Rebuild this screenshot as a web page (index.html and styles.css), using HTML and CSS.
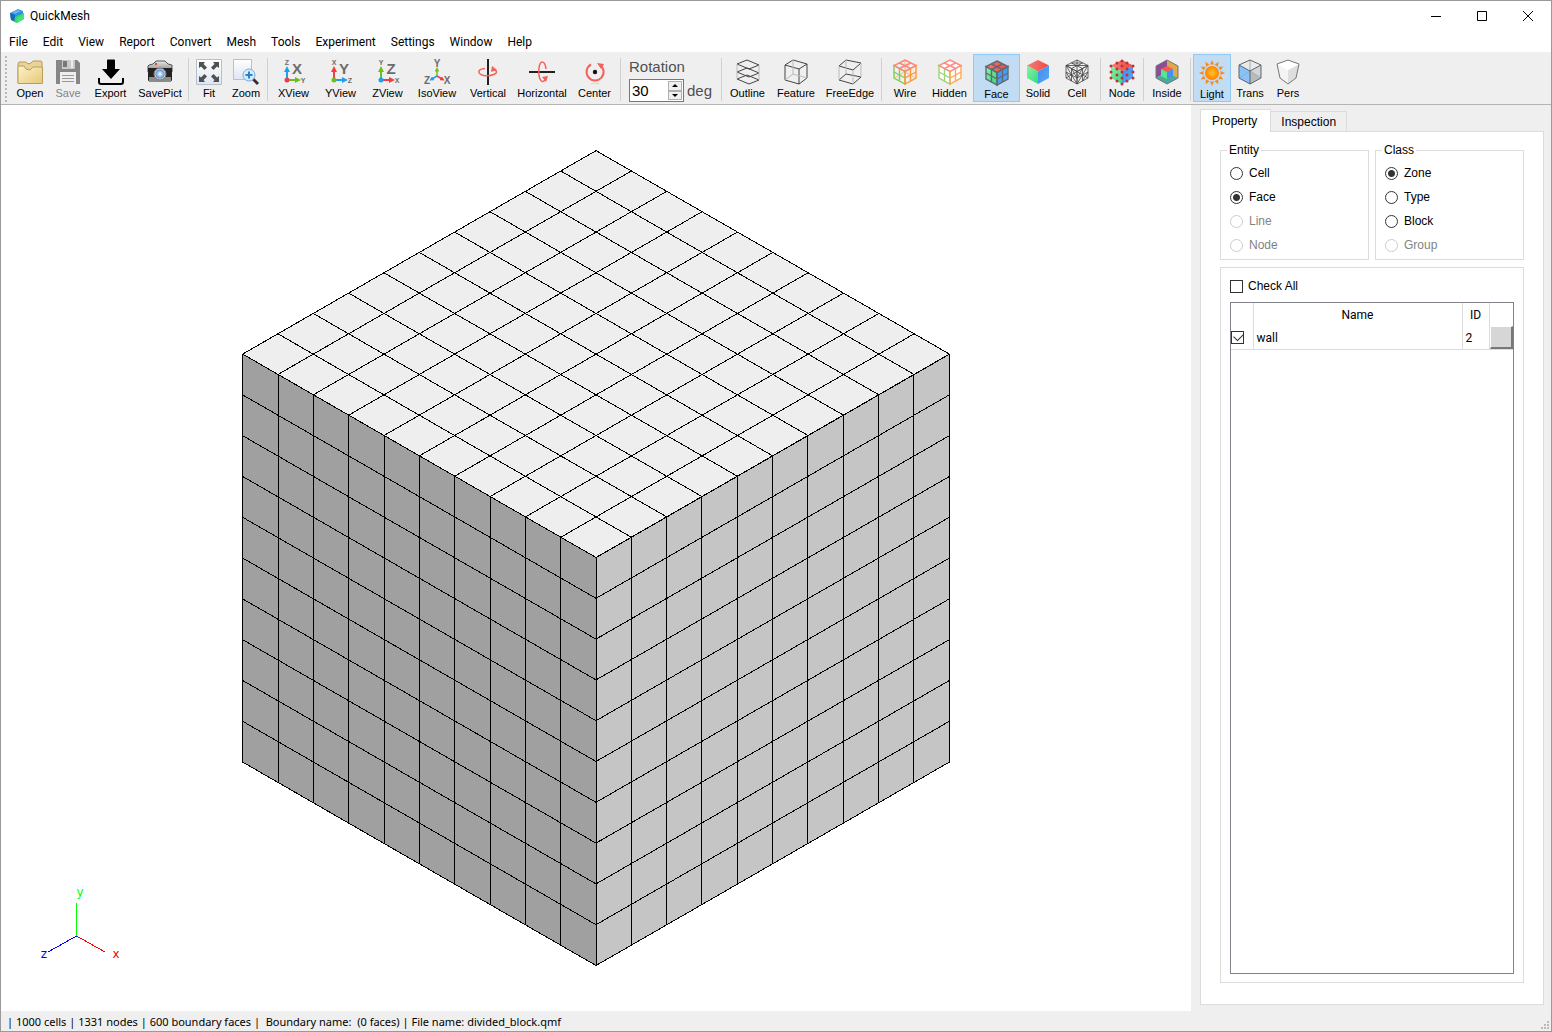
FILE: index.html
```html
<!DOCTYPE html>
<html lang="en">
<head>
    <meta charset="UTF-8">
    <meta name="viewport" content="width=device-width, initial-scale=1.0">
    <title>QuickMesh</title>
    <link rel="stylesheet" href="styles.css">
</head>
<body>
    <!-- Shapes shared by the toolbar icons -->
    <svg class="defs" aria-hidden="true">
        <defs>
            <marker id="arrow-blue" viewBox="0 0 6 6" refX="2" refY="3" markerWidth="3" markerHeight="3" orient="auto"><path d="M0 0L6 3L0 6z" fill="#1ea0f0"/></marker>
            <marker id="arrow-green" viewBox="0 0 6 6" refX="2" refY="3" markerWidth="3" markerHeight="3" orient="auto"><path d="M0 0L6 3L0 6z" fill="#6cbf1e"/></marker>
            <marker id="arrow-red" viewBox="0 0 6 6" refX="2" refY="3" markerWidth="3" markerHeight="3" orient="auto"><path d="M0 0L6 3L0 6z" fill="#f03c46"/></marker>
            <linearGradient id="folder" x1="0" y1="0" x2="1" y2="1"><stop offset="0" stop-color="#fdf3c8"/><stop offset="1" stop-color="#e5c87a"/></linearGradient>
            <linearGradient id="red-face" x1="0" y1="0" x2="1" y2="0"><stop offset="0" stop-color="#f87c78"/><stop offset="1" stop-color="#f04840"/></linearGradient>
            <linearGradient id="green-face" x1="0" y1="0" x2="1" y2="1"><stop offset="0" stop-color="#8df0a8"/><stop offset="1" stop-color="#2fdc78"/></linearGradient>
            <linearGradient id="blue-face" x1="0" y1="0" x2="1" y2="1"><stop offset="0" stop-color="#3c8cf0"/><stop offset="1" stop-color="#5aaaf8"/></linearGradient>
            <linearGradient id="tile" x1="0" y1="0" x2="0" y2="1"><stop offset="0" stop-color="#fff"/><stop offset="1" stop-color="#dde6f2"/></linearGradient>
            <linearGradient id="steel" x1="0" y1="0" x2="0" y2="1"><stop offset="0" stop-color="#e8e8e8"/><stop offset="1" stop-color="#808080"/></linearGradient>
            <radialGradient id="sun"><stop offset="0" stop-color="#ffc428"/><stop offset="1" stop-color="#ff8200"/></radialGradient>
            <radialGradient id="lens"><stop offset="0" stop-color="#fff"/><stop offset="0.5" stop-color="#a8ccff"/><stop offset="1" stop-color="#5582c8"/></radialGradient>
            <path id="ray" d="M13 0L15 4.500H11z"/>
            <g id="solid-cube">
                <path d="M13 1L24 6.500L13 12.500L2 6.500z" fill="url(#red-face)"/>
                <path d="M2 6.500L13 12.500V25L2 19z" fill="url(#green-face)"/>
                <path d="M24 6.500L13 12.500V25L24 19z" fill="url(#blue-face)"/>
            </g>
            <path id="top-grid" d="M13 1L24 6.500L13 12.500L2 6.500zM7.500 4L18.500 9.500M18.500 4L7.500 9.500"/>
            <path id="left-grid" d="M2 6.500L13 12.500V25L2 19zM7.500 9.500V22M2 13L13 19"/>
            <path id="right-grid" d="M24 6.500L13 12.500V25L24 19zM18.500 9.500V22M24 13L13 19"/>
        </defs>
    </svg>

    <div class="app">
        <header class="titlebar">
            <svg class="app-icon" viewBox="0 0 16 16" aria-hidden="true">
                <path d="M1 5L9 1L14 3V7L7 10L2 12z" fill="#2f8fe0"/>
                <path d="M1 5L6 7V14L2 12z" fill="#1769b8"/>
                <path d="M6 9L10 7L15 5V11L8 15L5 14z" fill="#35d36c"/>
                <path d="M8 10L15 6V11L8 15z" fill="#45e080"/>
                <path d="M3 4L9 2L12 3L6 6z" fill="#65b6f2"/>
            </svg>
            <h1 class="app-title">QuickMesh</h1>
            <div class="window-buttons">
                <button aria-label="Minimize"><svg viewBox="0 0 10 10"><path d="M0 5.500H10"/></svg></button>
                <button aria-label="Maximize"><svg viewBox="0 0 10 10"><path d="M.5.5H9.500V9.500H.5z"/></svg></button>
                <button aria-label="Close"><svg viewBox="0 0 10 10"><path d="M0 0L10 10M10 0L0 10"/></svg></button>
            </div>
        </header>

        <nav class="menubar">
            <button>File</button>
            <button>Edit</button>
            <button>View</button>
            <button>Report</button>
            <button>Convert</button>
            <button>Mesh</button>
            <button>Tools</button>
            <button>Experiment</button>
            <button>Settings</button>
            <button>Window</button>
            <button>Help</button>
        </nav>

        <div class="toolbar">
            <span class="grip"></span>
            <button class="tool w38">
                <svg viewBox="0 0 26 26"><path d="M1 24V5L2 3H9L11 5L14 4L16 2H24L25 3V24z" fill="#e9d396" stroke="#b99b53"/><path d="M1 24.500V8.500L2 7H7L9 10L13 11L16 8H25.500V24.500z" fill="url(#folder)" stroke="#bb9d58"/></svg>
                <span>Open</span>
            </button>
            <button class="tool w38" disabled>
                <svg viewBox="0 0 26 26"><path d="M1 1H22L25 4V25H1z" fill="#868686"/><path d="M7 1H20V10H7z" fill="#c9c9c9"/><path d="M8 2H12V8H8z" fill="#777"/><path d="M16 1H18V9H16z" fill="#eee"/><path d="M5 13H21V25H5z" fill="#eee"/><path d="M7 16.500H19M7 19.500H19M7 22.500H19" stroke="#999"/></svg>
                <span>Save</span>
            </button>
            <button class="tool w47">
                <svg viewBox="0 0 26 26"><path d="M9 1.500Q9 .5 10 .5H16Q17 .5 17 1.500V10H22L13 20L4 10H9z"/><path d="M1 19V23Q1 25 3 25H23Q25 25 25 23V19" fill="none" stroke="#000" stroke-width="2"/></svg>
                <span>Export</span>
            </button>
            <button class="tool w52">
                <svg viewBox="0 0 26 26"><path d="M2 6L6 5L9 2H18L21 5L25 6V13H1V7z" fill="url(#steel)" stroke="#555"/><path d="M1 9H25V21Q25 22 24 22H2Q1 22 1 21z" fill="#222"/><path d="M2 18H24V23H2z" fill="#8c8c8c"/><circle cx="13" cy="15" r="6" fill="#ccc" stroke="#777"/><circle cx="13" cy="15" r="4.500" fill="url(#lens)"/><circle cx="9" cy="5" r="1.200" fill="#ee4438"/></svg>
                <span>SavePict</span>
            </button>
            <span class="sep"></span>
            <button class="tool w36">
                <svg viewBox="0 0 26 26"><path d="M.5.5H25.500V25.500H.5z" fill="url(#tile)" stroke="#b7bfca"/><path d="M3 3H9L7.500 5L11 8.500L8.500 11L5 7.500L3 9zM23 3V9L21 7.500L17.500 11L15 8.500L18.500 5L17 3zM3 23V17L5 18.500L8.500 15L11 17.500L7.500 21L9 23zM23 23H17L18.500 21L15 17.500L17.500 15L21 18.500L23 17z" fill="#505050"/></svg>
                <span>Fit</span>
            </button>
            <button class="tool w38">
                <svg viewBox="0 0 26 26"><path d="M.5.5H18.500V20.500H.5z" fill="url(#tile)" stroke="#b7bfca"/><path d="M20 20L25 25" stroke="#333" stroke-width="3"/><circle cx="16" cy="16" r="6" fill="#d3ecff" stroke="#7caad8"/><path d="M12.500 16H19.500M16 12.500V19.500" stroke="#2482d2" stroke-width="2"/></svg>
                <span>Zoom</span>
            </button>
            <span class="sep"></span>
            <button class="tool w47">
                <svg viewBox="0 0 26 26" class="view-icon"><path d="M6 20V11" stroke="#1ea0f0" stroke-width="2" marker-end="url(#arrow-blue)"/><path d="M6 21H16" stroke="#6cbf1e" stroke-width="2" marker-end="url(#arrow-green)"/><circle cx="6" cy="21" r="2.500" fill="#f03c46"/><text x="6" y="6" class="small">Z</text><text x="22" y="24" class="small">Y</text><text x="16" y="15" class="big">X</text></svg>
                <span>XView</span>
            </button>
            <button class="tool w47">
                <svg viewBox="0 0 26 26" class="view-icon"><path d="M6 20V11" stroke="#f03c46" stroke-width="2" marker-end="url(#arrow-red)"/><path d="M6 21H16" stroke="#1ea0f0" stroke-width="2" marker-end="url(#arrow-blue)"/><circle cx="6" cy="21" r="2.500" fill="#6cbf1e"/><text x="6" y="6" class="small">X</text><text x="22" y="24" class="small">Z</text><text x="16" y="15" class="big">Y</text></svg>
                <span>YView</span>
            </button>
            <button class="tool w47">
                <svg viewBox="0 0 26 26" class="view-icon"><path d="M6 20V11" stroke="#6cbf1e" stroke-width="2" marker-end="url(#arrow-green)"/><path d="M6 21H16" stroke="#f03c46" stroke-width="2" marker-end="url(#arrow-red)"/><circle cx="6" cy="21" r="2.500" fill="#1ea0f0"/><text x="6" y="6" class="small">Y</text><text x="22" y="24" class="small">X</text><text x="16" y="15" class="big">Z</text></svg>
                <span>ZView</span>
            </button>
            <button class="tool w52">
                <svg viewBox="0 0 26 26" class="view-icon"><path d="M13 17V11" stroke="#6cbf1e" stroke-width="1.500" marker-end="url(#arrow-green)"/><path d="M13 17L8 20" stroke="#1ea0f0" stroke-width="1.500" marker-end="url(#arrow-blue)"/><path d="M13 17L18 20" stroke="#f03c46" stroke-width="1.500" marker-end="url(#arrow-red)"/><text x="13" y="8" class="mid">Y</text><text x="3" y="25" class="mid">Z</text><text x="23" y="25" class="mid">X</text></svg>
                <span>IsoView</span>
            </button>
            <button class="tool w50">
                <svg viewBox="0 0 26 26"><path d="M13 0V26" stroke="#222" stroke-width="2"/><path d="M10 9.500C2 10 2 15 9 16.500C17 17.500 25 14 20 11L17 10" fill="none" stroke="#f4605a" stroke-width="1.500"/><path d="M17 7L22 11L16 13z" fill="#f4605a"/></svg>
                <span>Vertical</span>
            </button>
            <button class="tool w58">
                <svg viewBox="0 0 26 26"><path d="M0 13H26" stroke="#222" stroke-width="2"/><path d="M17 10C16 1 11 1 10 9C9 18 12 26 16 21L17 18" fill="none" stroke="#f4605a" stroke-width="1.500"/><path d="M13 18L19 17L17 23z" fill="#f4605a"/></svg>
                <span>Horizontal</span>
            </button>
            <button class="tool w47">
                <svg viewBox="0 0 26 26"><path d="M9 5.500A8.500 8.500 0 1 0 18 6" fill="none" stroke="#f4605a" stroke-width="2"/><path d="M15 4L22 5L19 10z" fill="#f4605a"/><circle cx="13" cy="13" r="2.200" fill="#111"/><path d="M9 25Q13 23 17 25" fill="none" stroke="#f8c8c4"/></svg>
                <span>Center</span>
            </button>
            <span class="sep"></span>
            <div class="rotation">
                <label for="rotation">Rotation</label>
                <div class="rotation-row">
                    <div class="spinbox">
                        <input type="number" id="rotation" value="30">
                        <div class="spin-buttons">
                            <button aria-label="Increase"><svg viewBox="0 0 6 3"><path d="M0 3L3 0L6 3z"/></svg></button>
                            <button aria-label="Decrease"><svg viewBox="0 0 6 3"><path d="M0 0L3 3L6 0z"/></svg></button>
                        </div>
                    </div>
                    <span>deg</span>
                </div>
            </div>
            <span class="sep"></span>
            <button class="tool w47">
                <svg viewBox="0 0 26 26" class="line-icon"><path d="M2 5L12 1L24 6L14 10zM2 13L12 9L24 14L14 18zM2 20L12 16L24 21L14 25z"/><path d="M2 5V20M24 6V21" class="faint"/></svg>
                <span>Outline</span>
            </button>
            <button class="tool w50">
                <svg viewBox="0 0 26 26" class="line-icon"><path d="M2 6L10 1L24 5L16 10zM2 6V21L16 25V10M24 5V19L16 25"/><path d="M10 1V15L2 21M10 15L24 19" class="faint"/></svg>
                <span>Feature</span>
            </button>
            <button class="tool w58">
                <svg viewBox="0 0 26 26" class="line-icon"><path d="M2 7L9 1L24 4L16 11zM2 21L9 15L24 18L16 25z"/><path d="M2 7V21M24 4V18M9 1V15M16 11V25" class="faint"/></svg>
                <span>FreeEdge</span>
            </button>
            <span class="sep"></span>
            <button class="tool w42">
                <svg viewBox="0 0 26 26" class="wire-icon"><path d="M13 1V12M2 19L13 13L24 19" stroke="#f4c8a8"/><use href="#left-grid" stroke="#84cc5c"/><use href="#right-grid" stroke="#ff9838"/><use href="#top-grid" stroke="#ff8478"/></svg>
                <span>Wire</span>
            </button>
            <button class="tool w47">
                <svg viewBox="0 0 26 26" class="wire-icon"><path d="M13 1L24 6.500V19L13 25L2 19V6.500z" fill="#fff"/><use href="#left-grid" stroke="#9cd478"/><use href="#right-grid" stroke="#ffa850"/><use href="#top-grid" stroke="#ff8c84"/></svg>
                <span>Hidden</span>
            </button>
            <button class="tool w47 checked" aria-pressed="true">
                <svg viewBox="0 0 26 26" class="wire-icon"><use href="#solid-cube"/><g stroke="#626a70"><use href="#left-grid"/><use href="#right-grid"/><use href="#top-grid"/></g></svg>
                <span>Face</span>
            </button>
            <button class="tool w36">
                <svg viewBox="0 0 26 26"><use href="#solid-cube"/></svg>
                <span>Solid</span>
            </button>
            <button class="tool w42">
                <svg viewBox="0 0 26 26" class="cell-icon"><use href="#left-grid"/><use href="#right-grid"/><use href="#top-grid"/><path d="M2 6.500L13 25M24 6.500L13 25M2 13L7.500 22M7.500 9.500L13 19M24 13L18.500 22M18.500 9.500L13 19M2 6.500H24M7.500 4H18.500M13 1V12.500M2 19L13 12.500L24 19"/></svg>
                <span>Cell</span>
            </button>
            <span class="sep"></span>
            <button class="tool w38">
                <svg viewBox="0 0 26 26"><use href="#solid-cube"/><path d="M13 2h.01M8 4h.01M18 4h.01M2 7h.01M13 7h.01M24 7h.01M8 10h.01M18 10h.01M13 13h.01M2 13h.01M24 13h.01M8 16h.01M18 16h.01M13 19h.01M2 19h.01M24 19h.01M8 22h.01M18 22h.01M13 25h.01" stroke="#c03238" stroke-width="3" stroke-linecap="round"/></svg>
                <span>Node</span>
            </button>
            <span class="sep"></span>
            <button class="tool w42">
                <svg viewBox="0 0 26 26"><path d="M13 1V13L2 19V7z" fill="#8c4c98"/><path d="M13 1L24 7V19L13 13z" fill="#dca850"/><path d="M13 13L24 19L13 25L2 19z" fill="#49a99d"/><path d="M13 1L24 7V19L13 25L2 19V7z" fill="none" stroke="#777"/><path d="M13 7L19 10L13 13L7 10z" fill="#f85850"/><path d="M7 10L13 13V20L7 17z" fill="#55e890"/><path d="M19 10L13 13V20L19 17z" fill="#4490f5"/></svg>
                <span>Inside</span>
            </button>
            <span class="sep"></span>
            <button class="tool w38 checked" aria-pressed="true">
                <svg viewBox="0 0 26 26">
                    <g fill="#f68a1e">
                        <use href="#ray"/>
                        <use href="#ray" transform="rotate(30 13 13)"/>
                        <use href="#ray" transform="rotate(60 13 13)"/>
                        <use href="#ray" transform="rotate(90 13 13)"/>
                        <use href="#ray" transform="rotate(120 13 13)"/>
                        <use href="#ray" transform="rotate(150 13 13)"/>
                        <use href="#ray" transform="rotate(180 13 13)"/>
                        <use href="#ray" transform="rotate(210 13 13)"/>
                        <use href="#ray" transform="rotate(240 13 13)"/>
                        <use href="#ray" transform="rotate(270 13 13)"/>
                        <use href="#ray" transform="rotate(300 13 13)"/>
                        <use href="#ray" transform="rotate(330 13 13)"/>
                    </g>
                    <circle cx="13" cy="13" r="7" fill="url(#sun)"/>
                </svg>
                <span>Light</span>
            </button>
            <button class="tool w38">
                <svg viewBox="0 0 26 26"><path d="M13 1L24 6L13 12L2 6z" fill="#e8eaeb"/><path d="M2 6L13 12V25L2 19z" fill="#85c3fa"/><path d="M24 6L13 12V25L24 19z" fill="#d2d4d6"/><path d="M13 12L24 19L13 25z" fill="#b8bbbe"/><path d="M13 1V12L2 19M13 12L24 19" fill="none" stroke="#a4acb2"/><path d="M13 1L24 6V19L13 25L2 19V6zM2 6L13 12L24 6M13 12V25" fill="none" stroke="#606468"/></svg>
                <span>Trans</span>
            </button>
            <button class="tool w38">
                <svg viewBox="0 0 26 26"><path d="M13 1L24 5L21 19L13 25L5 19L2 5z" fill="#f4f4f4"/><path d="M13 11L24 5L21 19L13 25z" fill="#dedede"/><path d="M13 1L24 5L13 11L2 5z" fill="#fff"/><path d="M13 1L24 5L21 19L13 25L5 19L2 5z" fill="none" stroke="#777"/></svg>
                <span>Pers</span>
            </button>
        </div>

        <main class="workspace">
            <section class="viewer">
                <svg class="mesh" viewBox="241 149 710 818" role="img" aria-label="Block mesh">
                    <path d="M596 150.500L949.500 354L596 557.500L242.500 354z" fill="#eee"/>
                    <path d="M242.500 354L596 557.500V965.500L242.500 762z" fill="#a0a0a0"/>
                    <path d="M949.500 354L596 557.500V965.500L949.500 762z" fill="#c5c5c5"/>
                    <!-- left face columns, continued over the top -->
                    <path class="edge" d="M242.800 762v-408l353.500-203.500m-318.150 631.850v-408l353.500-203.500m-318.150 631.850v-408l353.500-203.500m-318.150 631.850v-408l353.500-203.500m-318.150 631.850v-408l353.500-203.500m-318.150 631.850v-408l353.500-203.500m-318.150 631.850v-408l353.500-203.500m-318.150 631.850v-408l353.500-203.500m-318.150 631.850v-408l353.500-203.500m-318.150 631.850v-408l353.500-203.500m-318.150 631.850v-408l353.500-203.500"/>
                    <!-- right face columns, continued over the top -->
                    <path class="edge" d="M949.300 762v-408l-353.500-203.500m318.150 631.850v-408l-353.500-203.500m318.150 631.850v-408l-353.500-203.500m318.150 631.850v-408l-353.500-203.500m318.150 631.850v-408l-353.500-203.500m318.150 631.850v-408l-353.500-203.500m318.150 631.850v-408l-353.500-203.500m318.150 631.850v-408l-353.500-203.500m318.150 631.850v-408l-353.500-203.500m318.150 631.850v-408l-353.500-203.500"/>
                    <!-- rows running round both side faces -->
                    <path class="edge" d="M242.500 354l353.500 203.500l353.500-203.500m-707 40.800l353.500 203.500l353.500-203.500m-707 40.800l353.500 203.500l353.500-203.500m-707 40.800l353.500 203.500l353.500-203.500m-707 40.800l353.500 203.500l353.500-203.500m-707 40.800l353.500 203.500l353.500-203.500m-707 40.800l353.500 203.500l353.500-203.500m-707 40.800l353.500 203.500l353.500-203.500m-707 40.800l353.500 203.500l353.500-203.500m-707 40.800l353.500 203.500l353.500-203.500m-707 40.800l353.500 203.500l353.500-203.500"/>
                </svg>
                <svg class="axes" viewBox="0 0 90 80" role="img" aria-label="Axes">
                    <path d="M40.500 52V19" stroke="#0f0"/>
                    <path d="M40.500 52L69 68" stroke="#f00"/>
                    <path d="M40.500 52L12 68" stroke="#00f"/>
                    <text x="44" y="12" fill="#0f0">y</text>
                    <text x="80" y="74" fill="#f00">x</text>
                    <text x="8" y="74" fill="#00f">z</text>
                </svg>
            </section>

            <aside class="side-panel">
                <div class="tabs" role="tablist">
                    <button class="tab active" role="tab" aria-selected="true">Property</button>
                    <button class="tab" role="tab" aria-selected="false">Inspection</button>
                </div>
                <div class="tab-pane" role="tabpanel">
                    <div class="groups">
                        <fieldset>
                            <legend>Entity</legend>
                            <label><input type="radio" name="entity">Cell</label>
                            <label><input type="radio" name="entity" checked>Face</label>
                            <label class="disabled"><input type="radio" name="entity" disabled>Line</label>
                            <label class="disabled"><input type="radio" name="entity" disabled>Node</label>
                        </fieldset>
                        <fieldset>
                            <legend>Class</legend>
                            <label><input type="radio" name="class" checked>Zone</label>
                            <label><input type="radio" name="class">Type</label>
                            <label><input type="radio" name="class">Block</label>
                            <label class="disabled"><input type="radio" name="class" disabled>Group</label>
                        </fieldset>
                    </div>
                    <div class="zone-box">
                        <label class="check-all"><input type="checkbox">Check All</label>
                        <div class="zone-list">
                            <table>
                                <thead>
                                    <tr>
                                        <th class="col-check"></th>
                                        <th>Name</th>
                                        <th class="col-id">ID</th>
                                        <th class="col-color"></th>
                                    </tr>
                                </thead>
                                <tbody>
                                    <tr>
                                        <td><input type="checkbox" aria-label="Show wall" checked></td>
                                        <td class="text">wall</td>
                                        <td class="text">2</td>
                                        <td><button class="color-button" aria-label="Zone color"></button></td>
                                    </tr>
                                </tbody>
                            </table>
                        </div>
                    </div>
                </div>
            </aside>
        </main>

        <footer class="statusbar">
            <span class="status-text">| 1000 cells | 1331 nodes | 600 boundary faces |  Boundary name:  (0 faces) | File name: divided_block.qmf</span>
            <svg class="size-grip" viewBox="0 0 8 8" aria-hidden="true"><path d="M6 0h2v2h-2zM3 3h2v2h-2zM6 3h2v2h-2zM0 6h2v2h-2zM3 6h2v2h-2zM6 6h2v2h-2z"/></svg>
        </footer>
    </div>
</body>
</html>
```
FILE: styles.css
```css
* {
    box-sizing: border-box;
}
body {
    margin: 0;
    font-family: "Liberation Sans", Arial, sans-serif;
    font-size: 12px;
    color: #000;
}
button, input {
    font: inherit;
    color: inherit;
    margin: 0;
}
button {
    background: none;
    border: none;
    padding: 0;
}
.defs {
    position: absolute;
    width: 0;
    height: 0;
}
.app {
    display: flex;
    flex-direction: column;
    height: 100vh;
    border: 1px solid #999;
    background: #efefef;
}

/* title bar and menu */
.titlebar {
    display: flex;
    align-items: center;
    height: 29px;
    padding-left: 8px;
    background: #fff;
}
.app-icon {
    width: 16px;
    height: 16px;
}
.app-title {
    flex: 1;
    margin: 0 0 0 5px;
    font: 12px Roboto, sans-serif;
}
.window-buttons {
    display: flex;
    height: 100%;
}
.window-buttons button {
    display: flex;
    align-items: center;
    justify-content: center;
    width: 46px;
}
.window-buttons svg {
    width: 10px;
    height: 10px;
    fill: none;
    stroke: #000;
}
.menubar {
    display: flex;
    height: 23px;
    padding: 1px 0 0 1px;
    background: #fff;
    border-bottom: 1px solid #efefef;
    font-family: Roboto, sans-serif;
}
.menubar button {
    padding: 0 8px 0 7px;
}

/* toolbar */
.toolbar {
    display: flex;
    align-items: flex-start;
    height: 52px;
    padding: 1px 0 0 4px;
    border-bottom: 1px solid #b4b4b4;
}
.grip {
    align-self: center;
    width: 2px;
    height: 46px;
    margin-right: 4px;
    background: repeating-linear-gradient(#b8b8b8 0 2px, #efefef 2px 4px);
}
.sep {
    align-self: center;
    width: 1px;
    height: 43px;
    margin: 0 2px;
    background: #d0d0d0;
}
.tool {
    display: flex;
    flex-direction: column;
    align-items: center;
    flex: none;
    height: 48px;
    padding-top: 5px;
    font-size: 11px;
    line-height: 14px;
    white-space: nowrap;
}
.tool svg {
    width: 26px;
    height: 26px;
    margin-bottom: 1px;
    overflow: visible;
}
.tool:disabled {
    color: #838383;
}
.tool.checked {
    background: #c2dcf3;
    border: 1px solid #90c8f6;
}
.w36 { width: 36px; }
.w38 { width: 38px; }
.w42 { width: 42px; }
.w47 { width: 47px; }
.w50 { width: 50px; }
.w52 { width: 52px; }
.w58 { width: 58px; }
.view-icon text {
    font-weight: bold;
    line-height: 1;
    text-anchor: middle;
    fill: #6c6c6c;
}
.view-icon .small { font-size: 7px; }
.view-icon .mid { font-size: 10px; }
.view-icon .big { font-size: 15px; }
.line-icon, .cell-icon {
    fill: none;
    stroke: #444;
}
.line-icon .faint {
    stroke: #bbb;
}
.cell-icon {
    stroke-width: 0.8;
}
.wire-icon {
    fill: none;
    stroke-width: 1.4;
}
.rotation {
    align-self: center;
    width: 96px;
    padding: 2px 0 0 6px;
    font-size: 15px;
    line-height: 18px;
    color: #505050;
}
.rotation label {
    display: block;
    margin-bottom: 3px;
}
.rotation-row {
    display: flex;
    align-items: center;
    gap: 3px;
}
.spinbox {
    display: flex;
    width: 55px;
    height: 23px;
    border: 1px solid #777;
    background: #fff;
}
.spinbox input {
    flex: 1;
    min-width: 0;
    padding: 0 2px;
    border: none;
    outline: none;
    background: none;
    color: #000;
    appearance: textfield;
}
.spinbox input::-webkit-inner-spin-button {
    display: none;
}
.spin-buttons {
    display: flex;
    flex-direction: column;
    width: 16px;
    padding: 1px;
}
.spin-buttons button {
    display: flex;
    flex: 1;
    align-items: center;
    justify-content: center;
    background: #f0f0f0;
    border: 1px solid #b0b0b0;
}
.spin-buttons svg {
    width: 6px;
    height: 3px;
}

/* 3D view */
.workspace {
    display: flex;
    flex: 1;
    min-height: 0;
}
.viewer {
    position: relative;
    display: flex;
    flex: 1;
    align-items: center;
    justify-content: center;
    min-width: 0;
    background: #fff;
}
.mesh {
    width: 710px;
    max-width: 100%;
    max-height: 100%;
}
.edge {
    fill: none;
    stroke: #000;
    shape-rendering: crispEdges;
}
.axes {
    position: absolute;
    left: 35px;
    bottom: 47px;
    width: 90px;
    height: 80px;
    shape-rendering: crispEdges;
}
.axes text {
    font: 12px "DejaVu Sans", sans-serif;
    text-anchor: middle;
}

/* property panel */
.side-panel {
    display: flex;
    flex-direction: column;
    width: 360px;
    padding: 4px 7px 6px 9px;
}
.tabs {
    display: flex;
    align-items: flex-end;
    height: 22px;
}
.tab {
    height: 20px;
    padding: 0 10px;
    border: 1px solid #dcdcdc;
    border-width: 1px 1px 0 0;
}
/* the open tab covers the pane's top border */
.tab.active {
    position: relative;
    height: 23px;
    margin-bottom: -1px;
    padding: 0 13px 0 11px;
    border-width: 1px 1px 0 1px;
    background: #fff;
}
.tab-pane {
    display: flex;
    flex: 1;
    flex-direction: column;
    padding: 10px 19px 21px;
    border: 1px solid #dcdcdc;
    background: #fff;
}
.groups {
    display: flex;
    gap: 6px;
}
fieldset {
    flex: 1;
    min-width: 0;
    margin: 0;
    padding: 3px 9px 2px;
    border: 1px solid #dcdcdc;
}
legend {
    margin-left: -3px;
    padding: 0 2px;
    line-height: 16px;
}
fieldset label {
    display: flex;
    align-items: center;
    gap: 6px;
    height: 24px;
}
fieldset label.disabled {
    color: #838383;
}
input[type="radio"], input[type="checkbox"] {
    appearance: none;
    flex: none;
    width: 13px;
    height: 13px;
    border: 1px solid #333;
    background: #fff;
}
input[type="radio"] {
    border-radius: 50%;
}
input[type="radio"]:checked {
    background: radial-gradient(circle, #333 0 3px, #fff 4px);
}
input[type="radio"]:disabled {
    border-color: #ccc;
}
.zone-box {
    display: flex;
    flex: 1;
    flex-direction: column;
    margin-top: 7px;
    padding: 8px 9px;
    border: 1px solid #dcdcdc;
}
.check-all {
    display: flex;
    align-items: center;
    gap: 5px;
    height: 20px;
    margin-bottom: 6px;
}
.zone-list {
    flex: 1;
    border: 1px solid #82828a;
}
.zone-list table {
    width: 100%;
    border-collapse: collapse;
    table-layout: fixed;
    font-family: Roboto, sans-serif;
}
.zone-list th, .zone-list td {
    height: 23px;
    padding: 0;
    border-right: 1px solid #dcdcdc;
    font-weight: normal;
    line-height: 16px;
}
.zone-list th:last-child, .zone-list td:last-child {
    border-right: none;
}
.zone-list td {
    border-bottom: 1px solid #dcdcdc;
}
.zone-list td.text {
    padding-left: 3px;
}
.zone-list input, .color-button {
    display: block;
}
.zone-list input:checked {
    position: relative;
}
.zone-list input:checked::after {
    content: "";
    position: absolute;
    left: 2px;
    top: 1px;
    width: 8px;
    height: 5px;
    border: solid #333;
    border-width: 0 0 1px 1px;
    transform: rotate(-45deg);
}
.col-check { width: 22px; }
.col-id { width: 27px; }
.col-color { width: 24px; }
.color-button {
    width: 100%;
    height: 23px;
    background: #d6d6d6;
    border: 1px solid #fff;
    border-right: 2px solid #777;
    border-bottom: 2px solid #777;
}

/* status bar */
.statusbar {
    display: flex;
    align-items: center;
    justify-content: space-between;
    height: 20px;
    padding: 0 2px 0 6px;
    font-family: "Noto Sans", sans-serif;
    font-size: 11px;
}
.status-text {
    white-space: pre;
}
.size-grip {
    align-self: flex-end;
    width: 8px;
    height: 8px;
    margin-bottom: 2px;
    fill: #bbb;
}
```
